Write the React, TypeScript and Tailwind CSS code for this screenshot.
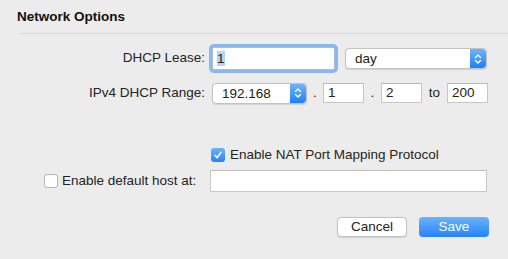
import React from "react";

function Stepper() {
  return (
    <div className="flex h-full w-[16px] items-center justify-center rounded-r-[4px] bg-gradient-to-b from-[#6cb4fb] to-[#1b7ffb]">
      <svg width="8" height="12" viewBox="0 0 8 12" fill="none" stroke="white" strokeWidth="1.4" strokeLinecap="round" strokeLinejoin="round">
        <path d="M1.5 4.5 L4 2 L6.5 4.5" />
        <path d="M1.5 7.5 L4 10 L6.5 7.5" />
      </svg>
    </div>
  );
}

function Popup({ value, width }: { value: string; width: string }) {
  return (
    <div
      className={`flex h-[21px] ${width} items-stretch rounded-[4px] border border-[#c3c3c3] bg-white shadow-[0_0.5px_1px_rgba(0,0,0,0.12)]`}
    >
      <span className="flex-1 pl-[9px] leading-[19px] text-[#222]">{value}</span>
      <Stepper />
    </div>
  );
}

function Field({ value }: { value: string }) {
  return (
    <div className="h-[20px] w-[41px] border border-[#c6c6c6] border-t-[#b8b8b8] bg-white pl-[4px] leading-[18px] text-[#222]">
      {value}
    </div>
  );
}

export default function App() {
  return (
    <div
      className="h-[259px] w-[508px] overflow-hidden bg-[#ececec] text-[13.5px] text-[#242424]"
      style={{ fontFamily: '"Liberation Sans", Arial, sans-serif' }}
    >
      <div className="pl-[17px] pt-[9px] font-bold leading-[16px] text-[#111]">
        Network Options
      </div>
      <div className="ml-[20px] mt-[8px] h-px bg-[#d9d9d9]" />

      <div className="mt-[13px] flex h-[23px] items-center">
        <span className="w-[205px] text-right">DHCP Lease:</span>
        <div className="ml-[7px] h-[23px] w-[123px] rounded-[2px] border border-[#9fbfe9] bg-white pl-[4px] leading-[21px] shadow-[0_0_0_3px_#8db6ec]">
          <span className="bg-[#b4d5fe] text-[#222]">1</span>
        </div>
        <div className="ml-[10px]">
          <Popup value="day" width="w-[142px]" />
        </div>
      </div>

      <div className="mt-[12px] flex h-[22px] items-center">
        <span className="w-[205px] text-right">IPv4 DHCP Range:</span>
        <div className="ml-[7px]">
          <Popup value="192.168" width="w-[95px]" />
        </div>
        <span className="w-[16px] text-center">.</span>
        <Field value="1" />
        <span className="w-[17px] text-center">.</span>
        <Field value="2" />
        <span className="w-[25px] text-center">to</span>
        <Field value="200" />
      </div>

      <div className="mt-[43px] flex h-[16px] items-center pl-[211px]">
        <div className="flex h-[14px] w-[14px] items-center justify-center rounded-[3px] bg-gradient-to-b from-[#6cb4fb] to-[#1f82fb]">
          <svg width="10" height="10" viewBox="0 0 10 10" fill="none" stroke="white" strokeWidth="1.6" strokeLinecap="round" strokeLinejoin="round">
            <path d="M2 5.3 L4.2 7.6 L8 2.3" />
          </svg>
        </div>
        <span className="ml-[5px]">Enable NAT Port Mapping Protocol</span>
      </div>

      <div className="mt-[7px] flex h-[22px] items-center">
        <div className="flex w-[210px] items-center pl-[44px]">
          <div className="h-[14px] w-[14px] rounded-[3px] border border-[#b5b5b5] bg-white" />
          <span className="ml-[4px]">Enable default host at:</span>
        </div>
        <div className="h-[22px] w-[277px] border border-[#c8c8c8] border-t-[#bcbcbc] bg-white" />
      </div>

      <div className="mt-[25px] flex pl-[337px]">
        <button className="h-[20px] w-[70px] rounded-[4px] border border-[#c4c4c4] bg-white leading-[18px] text-[#222] shadow-[0_0.5px_1px_rgba(0,0,0,0.12)]">
          Cancel
        </button>
        <button className="ml-[12px] h-[20px] w-[70px] rounded-[4px] bg-gradient-to-b from-[#6ab2fb] to-[#2483fb] leading-[20px] text-white">
          Save
        </button>
      </div>
    </div>
  );
}
